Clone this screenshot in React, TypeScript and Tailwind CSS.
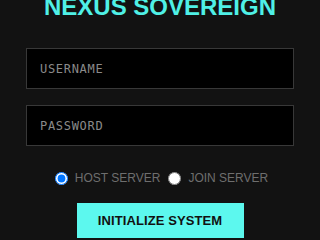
import { useState } from "react";

export default function App() {
  const [mode, setMode] = useState("host");

  return (
    <div className="h-screen w-full overflow-hidden bg-[#121212] font-['Liberation_Sans',Arial,sans-serif]">
      <div className="flex flex-col items-center">
        {/* Title */}
        <h1 className="mt-[-7px] text-[24px] leading-[28px] font-bold text-[#4ff0e6] tracking-normal">
          NEXUS SOVEREIGN
        </h1>

        {/* Fields */}
        <div className="mt-[27px] flex w-[268px] flex-col gap-[16px]">
          <input
            type="text"
            placeholder="USERNAME"
            className="h-[41px] w-full border border-[#383838] bg-black px-[13px] font-['DejaVu_Sans_Mono',monospace] text-[12px] tracking-[0.7px] text-[#cfcfcf] placeholder:text-[#8a8a8a] outline-none"
          />
          <input
            type="password"
            placeholder="PASSWORD"
            className="h-[41px] w-full border border-[#383838] bg-black px-[13px] font-['DejaVu_Sans_Mono',monospace] text-[12px] tracking-[0.7px] text-[#cfcfcf] placeholder:text-[#8a8a8a] outline-none"
          />
        </div>

        {/* Mode select */}
        <div className="mt-[25px] flex items-center pl-[3px] text-[12px] leading-[14px] text-[#6e6e6e]">
          <label className="flex items-center gap-[7px]">
            <input
              type="radio"
              name="mode"
              checked={mode === "host"}
              onChange={() => setMode("host")}
              className="m-0 h-[13px] w-[13px]"
            />
            HOST SERVER
          </label>
          <label className="ml-[8px] flex items-center gap-[7px]">
            <input
              type="radio"
              name="mode"
              checked={mode === "join"}
              onChange={() => setMode("join")}
              className="m-0 h-[13px] w-[13px]"
            />
            JOIN SERVER
          </label>
        </div>

        {/* Submit */}
        <button className="mt-[18px] h-[35px] w-[167px] bg-[#5cf8ee] text-[13px] font-bold tracking-[0.1px] text-[#111]">
          INITIALIZE SYSTEM
        </button>
      </div>
    </div>
  );
}
